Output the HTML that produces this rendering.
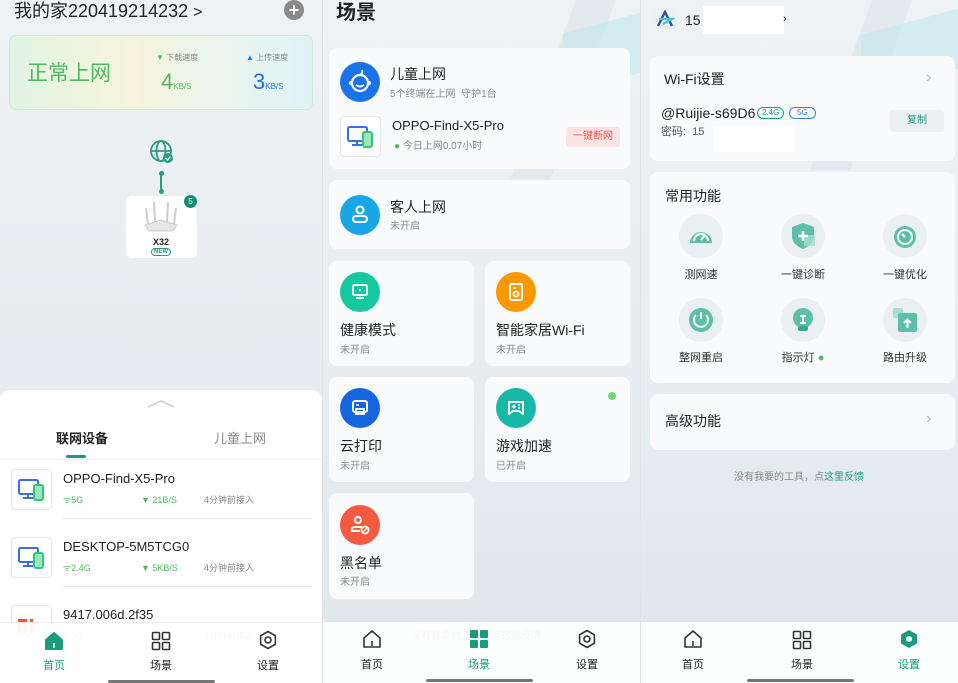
<!DOCTYPE html>
<html><head><meta charset="utf-8"><style>
*{margin:0;padding:0;box-sizing:border-box}
body{width:958px;height:683px;overflow:hidden;font-family:"Liberation Sans","Noto Sans CJK SC",sans-serif;color:#222;background:#fff;position:relative}
.p{position:absolute;top:0;height:683px;overflow:hidden;background:linear-gradient(180deg,#eef2f5 0%,#e6ecef 60%,#dfe7eb 100%)}
.a{position:absolute;white-space:nowrap}
.c{position:absolute;background:#f8fafb;border-radius:8px}
.t{line-height:1}
.nav{position:absolute;left:0;right:0;top:622px;height:61px;background:rgba(255,255,255,.93)}
.nl{position:absolute;top:34px;font-size:11px;transform:translateX(-50%);color:#222}
.ind{position:absolute;top:57px;height:3px;width:107px;background:#777;border-radius:2px}
.g{color:#8a8a8a}
.circ{position:absolute;width:40px;height:40px;border-radius:50%}
.fi{position:absolute;width:44px;height:44px;border-radius:50%;background:#eaf0f1}
.fl{position:absolute;font-size:11px;color:#333;transform:translateX(-50%)}
</style></head><body>

<!-- Panel 1 -->
<div class="p" style="left:0;width:322px">
 <div class="a t" style="left:14px;top:2px;font-size:18px">我的家220419214232 <span style="font-size:16px">&gt;</span></div>
 <div class="a" style="left:284px;top:0;width:20px;height:20px;border-radius:50%;background:#8a8a8a;color:#fff;font-size:18px;line-height:20px;text-align:center;font-weight:bold">+</div>
 <div class="a" style="left:9px;top:35px;width:304px;height:75px;border-radius:7px;border:1px solid #d4e8d8;background:linear-gradient(90deg,#e2f4e4 0%,#f6f4dc 40%,#eaf5ee 70%,#dff3f6 100%)"></div>
 <div class="a t" style="left:27px;top:63px;font-size:21px;color:#4dbb5c">正常上网</div>
 <div class="a t" style="left:156px;top:54px;font-size:8px;color:#888"><span style="color:#4dbb5c">▼</span> 下载速度</div>
 <div class="a t" style="left:161px;top:71px;font-size:22px;color:#4dbb5c">4<span style="font-size:8px">KB/S</span></div>
 <div class="a t" style="left:246px;top:54px;font-size:8px;color:#888"><span style="color:#1e6ff0">▲</span> 上传速度</div>
 <div class="a t" style="left:253px;top:71px;font-size:22px;color:#1e6ff0">3<span style="font-size:8px">KB/S</span></div>
 <svg class="a" style="left:149px;top:139px" width="26" height="26" viewBox="0 0 26 26"><g fill="none" stroke="#2a9d80" stroke-width="1.8"><circle cx="12" cy="12" r="10"/><ellipse cx="12" cy="12" rx="4.5" ry="10"/><line x1="2" y1="12" x2="22" y2="12"/></g><circle cx="19" cy="19" r="5" fill="#2a9d80"/><path d="M16.5 19l2 2 3-3.5" stroke="#fff" stroke-width="1.3" fill="none"/></svg>
 <div class="a" style="left:160px;top:173px;width:1.5px;height:19px;background:#2a9d80"></div>
 <div class="a" style="left:158.5px;top:171px;width:5px;height:5px;border-radius:50%;background:#2a9d80"></div>
 <div class="a" style="left:158.5px;top:189px;width:5px;height:5px;border-radius:50%;background:#2a9d80"></div>
 <div class="a" style="left:126px;top:196px;width:71px;height:62px;background:#fff;border-radius:6px"></div>
 <svg class="a" style="left:140px;top:200px" width="42" height="35"><g stroke="#ccc" stroke-width="2"><line x1="6" y1="8" x2="8" y2="24"/><line x1="14" y1="2" x2="15" y2="22"/><line x1="28" y1="2" x2="27" y2="22"/><line x1="36" y1="8" x2="34" y2="24"/></g><path d="M5 25 L21 20 L37 25 L33 31 L9 31Z" fill="#e6e6e6" stroke="#ccc"/></svg>
 <div class="a t" style="left:153px;top:238px;font-size:9px;font-weight:bold">X32</div>
 <div class="a t" style="left:151px;top:248px;font-size:6px;color:#2a9d80;border:1px solid #2a9d80;border-radius:5px;padding:0 2px;font-weight:bold">NEW</div>
 <div class="a" style="left:184px;top:195px;width:13px;height:13px;border-radius:50%;background:#148f74;color:#fff;font-size:8px;line-height:13px;text-align:center">5</div>

 <div class="a" style="left:0;top:390px;width:322px;height:293px;background:#fff;border-radius:10px 10px 0 0"></div>
 <svg class="a" style="left:147px;top:399px" width="28" height="10"><path d="M1 8 L14 2 L27 8" stroke="#ccc" stroke-width="1.5" fill="none"/></svg>
 <div class="a t" style="left:56px;top:432px;font-size:13px;font-weight:bold">联网设备</div>
 <div class="a t" style="left:214px;top:432px;font-size:13px;color:#888">儿童上网</div>
 <div class="a" style="left:66px;top:455px;width:20px;height:3px;border-radius:2px;background:#1a9c7c"></div>
 <div class="a" style="left:0;top:459px;width:322px;height:1px;background:#eee"></div>

 <div class="a" style="left:11px;top:469px;width:41px;height:41px;border:1px solid #e6e6e6;border-radius:4px;background:#fff"></div>
 <svg class="a" style="left:17px;top:477px" width="30" height="26"><rect x="2" y="3" width="19" height="14" rx="1.5" fill="none" stroke="#3a6de8" stroke-width="2"/><line x1="11" y1="17" x2="11" y2="21" stroke="#3a6de8" stroke-width="2"/><line x1="6" y1="21" x2="16" y2="21" stroke="#3a6de8" stroke-width="2"/><rect x="17" y="8" width="9" height="15" rx="2" fill="#9be9b8" stroke="#2ec77a" stroke-width="2"/></svg>
 <div class="a t" style="left:63px;top:472px;font-size:13px">OPPO-Find-X5-Pro</div>
 <div class="a t" style="left:63px;top:496px;font-size:9px;color:#4dbb5c">ᯤ5G</div>
 <div class="a t" style="left:141px;top:496px;font-size:9px;color:#4dbb5c">▼ 21B/S</div>
 <div class="a t" style="left:204px;top:496px;font-size:9px;color:#888">4分钟前接入</div>
 <div class="a" style="left:63px;top:518px;width:249px;height:1px;background:#e6e6e6"></div>

 <div class="a" style="left:11px;top:537px;width:41px;height:41px;border:1px solid #e6e6e6;border-radius:4px;background:#fff"></div>
 <svg class="a" style="left:17px;top:545px" width="30" height="26"><rect x="2" y="3" width="19" height="14" rx="1.5" fill="none" stroke="#3a6de8" stroke-width="2"/><line x1="11" y1="17" x2="11" y2="21" stroke="#3a6de8" stroke-width="2"/><line x1="6" y1="21" x2="16" y2="21" stroke="#3a6de8" stroke-width="2"/><rect x="17" y="8" width="9" height="15" rx="2" fill="#9be9b8" stroke="#2ec77a" stroke-width="2"/></svg>
 <div class="a t" style="left:63px;top:540px;font-size:13px">DESKTOP-5M5TCG0</div>
 <div class="a t" style="left:63px;top:564px;font-size:9px;color:#4dbb5c">ᯤ2.4G</div>
 <div class="a t" style="left:141px;top:564px;font-size:9px;color:#4dbb5c">▼ 5KB/S</div>
 <div class="a t" style="left:204px;top:564px;font-size:9px;color:#888">4分钟前接入</div>
 <div class="a" style="left:63px;top:586px;width:249px;height:1px;background:#e6e6e6"></div>

 <div class="a" style="left:11px;top:605px;width:41px;height:41px;border:1px solid #e6e6e6;border-radius:4px;background:#fff"></div>
 <div class="a" style="left:18px;top:619px;width:8px;height:14px;border:3px solid #f05a22;border-bottom:none;border-right:none"></div>
 <div class="a" style="left:24px;top:619px;width:3px;height:14px;background:#f05a22"></div>
 <div class="a" style="left:30px;top:619px;width:3px;height:14px;background:#f05a22"></div>
 <div class="a t" style="left:63px;top:608px;font-size:13px">9417.006d.2f35</div>
 <div class="a t" style="left:63px;top:632px;font-size:9px;color:#4dbb5c">ᯤ5G</div>
 <div class="a t" style="left:141px;top:632px;font-size:9px;color:#4dbb5c">▼ 0B/S</div>
 <div class="a t" style="left:204px;top:632px;font-size:9px;color:#888">3分钟前接入</div>

 <div class="nav" style="border-top:1px solid #eee">
  <svg class="a" style="left:44px;top:8px" width="20" height="20"><path d="M2 9 L10 2 L18 9 V18 H2Z" fill="#1a9c7c" stroke="#1a9c7c" stroke-linejoin="round" stroke-width="2"/><line x1="10" y1="12" x2="10" y2="17" stroke="#fff" stroke-width="1.5"/></svg>
  <div class="nl" style="left:54px;color:#1a9c7c">首页</div>
  <svg class="a" style="left:151px;top:8px" width="20" height="20"><g fill="none" stroke="#333" stroke-width="1.6"><rect x="1.5" y="1.5" width="7" height="7" rx="1"/><rect x="11.5" y="1.5" width="7" height="7" rx="1"/><rect x="1.5" y="11.5" width="7" height="7" rx="1"/><rect x="11.5" y="11.5" width="7" height="7" rx="1"/></g></svg>
  <div class="nl" style="left:161px">场景</div>
  <svg class="a" style="left:258px;top:7px" width="20" height="21" viewBox="0 0 20 21"><path d="M10 1.5 L17.4 5.8 V14.2 L10 18.5 L2.6 14.2 V5.8Z" fill="none" stroke="#333" stroke-width="1.6" stroke-linejoin="round"/><circle cx="10" cy="10" r="3" fill="none" stroke="#333" stroke-width="1.6"/></svg>
  <div class="nl" style="left:268px">设置</div>
  <div class="ind" style="left:108px"></div>
 </div>
</div>

<!-- Panel 2 -->
<div class="p" style="left:322px;width:318px;border-left:1px solid #e0e4e6">
 <div class="a" style="left:220px;top:0;width:40px;height:180px;background:rgba(220,226,230,.6);transform:skewX(-20deg)"></div>
 <div class="a" style="left:240px;top:20px;width:100px;height:60px;background:rgba(190,232,238,.55);transform:skewY(-15deg)"></div>
 <div class="a t" style="left:13px;top:3px;font-size:20px;font-weight:bold">场景</div>
 <div class="c" style="left:6px;top:48px;width:301px;height:121px"></div>
 <div class="circ" style="left:17px;top:62px;background:#1a73e8"></div>
 <svg class="a" style="left:23px;top:68px" width="28" height="28"><circle cx="14" cy="15" r="8" fill="none" stroke="#fff" stroke-width="2.2"/><path d="M14 7 q3-2 2-5" stroke="#fff" stroke-width="2" fill="none"/><path d="M10 17 q4 3 8 0" stroke="#fff" stroke-width="2" fill="none"/><circle cx="5" cy="15" r="2" fill="#fff"/><circle cx="23" cy="15" r="2" fill="#fff"/></svg>
 <div class="a t" style="left:67px;top:67px;font-size:14px">儿童上网</div>
 <div class="a t g" style="left:67px;top:90px;font-size:10px">5个终端在上网&nbsp; 守护1台</div>
 <div class="a" style="left:17px;top:116px;width:41px;height:41px;border:1px solid #e6e6e6;border-radius:4px;background:#fff"></div>
 <svg class="a" style="left:23px;top:124px" width="30" height="26"><rect x="2" y="3" width="19" height="14" rx="1.5" fill="none" stroke="#3a6de8" stroke-width="2"/><line x1="11" y1="17" x2="11" y2="21" stroke="#3a6de8" stroke-width="2"/><line x1="6" y1="21" x2="16" y2="21" stroke="#3a6de8" stroke-width="2"/><rect x="17" y="8" width="9" height="15" rx="2" fill="#9be9b8" stroke="#2ec77a" stroke-width="2"/></svg>
 <div class="a t" style="left:69px;top:119px;font-size:13px">OPPO-Find-X5-Pro</div>
 <div class="a t g" style="left:71px;top:142px;font-size:10px"><span style="color:#4dbb5c">●</span> 今日上网0.07小时</div>
 <div class="a" style="left:243px;top:127px;width:54px;height:20px;border-radius:3px;background:#fbe4e4;color:#e05555;font-size:10px;line-height:20px;text-align:center">一键断网</div>

 <div class="c" style="left:6px;top:180px;width:301px;height:69px"></div>
 <div class="circ" style="left:17px;top:195px;background:#1aa7e8"></div>
 <svg class="a" style="left:27px;top:204px" width="20" height="20"><circle cx="10" cy="6" r="3.5" fill="none" stroke="#fff" stroke-width="2"/><rect x="3" y="12" width="14" height="6" rx="3" fill="none" stroke="#fff" stroke-width="2"/></svg>
 <div class="a t" style="left:67px;top:200px;font-size:14px">客人上网</div>
 <div class="a t g" style="left:67px;top:222px;font-size:10px">未开启</div>

 <div class="c" style="left:6px;top:261px;width:145px;height:105px"></div>
 <div class="circ" style="left:17px;top:272px;background:#14c9a0"></div>
 <svg class="a" style="left:27px;top:282px" width="20" height="20"><rect x="3" y="3" width="14" height="10" rx="1.5" fill="none" stroke="#fff" stroke-width="2"/><line x1="6" y1="16" x2="14" y2="16" stroke="#fff" stroke-width="2"/><circle cx="10" cy="8" r="1" fill="#fff"/></svg>
 <div class="a t" style="left:17px;top:323px;font-size:14px">健康模式</div>
 <div class="a t g" style="left:17px;top:346px;font-size:10px">未开启</div>

 <div class="c" style="left:162px;top:261px;width:145px;height:105px"></div>
 <div class="circ" style="left:173px;top:272px;background:#ff9800"></div>
 <svg class="a" style="left:183px;top:282px" width="20" height="20"><rect x="4" y="2" width="12" height="16" rx="1.5" fill="none" stroke="#fff" stroke-width="2"/><circle cx="10" cy="12" r="2.5" fill="none" stroke="#fff" stroke-width="1.8"/><line x1="7" y1="6" x2="10" y2="6" stroke="#fff" stroke-width="1.5"/></svg>
 <div class="a t" style="left:173px;top:323px;font-size:14px">智能家居Wi-Fi</div>
 <div class="a t g" style="left:173px;top:346px;font-size:10px">未开启</div>

 <div class="c" style="left:6px;top:377px;width:145px;height:105px"></div>
 <div class="circ" style="left:17px;top:388px;background:#1565e0"></div>
 <svg class="a" style="left:27px;top:398px" width="20" height="20"><rect x="3" y="3" width="14" height="11" rx="2" fill="none" stroke="#fff" stroke-width="2"/><rect x="6" y="11" width="8" height="5" fill="none" stroke="#fff" stroke-width="1.8"/><line x1="6" y1="7" x2="9" y2="7" stroke="#fff" stroke-width="1.5"/></svg>
 <div class="a t" style="left:17px;top:439px;font-size:14px">云打印</div>
 <div class="a t g" style="left:17px;top:462px;font-size:10px">未开启</div>

 <div class="c" style="left:162px;top:377px;width:145px;height:105px"></div>
 <div class="circ" style="left:173px;top:388px;background:#17b8a8"></div>
 <svg class="a" style="left:183px;top:398px" width="20" height="20"><path d="M3 4 H17 V16 L13 13 H7 L3 16Z" fill="none" stroke="#fff" stroke-width="2" stroke-linejoin="round"/><path d="M6 8.5h4M8 6.5v4" stroke="#fff" stroke-width="1.5"/><circle cx="13" cy="7" r="1" fill="#fff"/><circle cx="13" cy="10" r="1" fill="#fff"/></svg>
 <div class="a t" style="left:173px;top:439px;font-size:14px">游戏加速</div>
 <div class="a t g" style="left:173px;top:462px;font-size:10px">已开启</div>
 <div class="a" style="left:285px;top:392px;width:8px;height:8px;border-radius:50%;background:#6ed87a"></div>

 <div class="c" style="left:6px;top:493px;width:145px;height:106px"></div>
 <div class="circ" style="left:17px;top:505px;background:#f35a3f"></div>
 <svg class="a" style="left:27px;top:515px" width="22" height="22"><circle cx="8" cy="5" r="3" fill="none" stroke="#fff" stroke-width="2"/><path d="M12 12 H5 q-3 0-3 3 v1 h8" fill="none" stroke="#fff" stroke-width="2"/><circle cx="15" cy="15" r="3.5" fill="none" stroke="#fff" stroke-width="1.8"/><line x1="13" y1="17" x2="17" y2="13" stroke="#fff" stroke-width="1.5"/></svg>
 <div class="a t" style="left:17px;top:556px;font-size:14px">黑名单</div>
 <div class="a t g" style="left:17px;top:578px;font-size:10px">未开启</div>
 <div class="a t" style="left:88px;top:632px;font-size:10px;color:#888">没有我要的工具，点<span style="color:#1a9c7c">这里反馈</span></div>

 <div class="nav">
  <svg class="a" style="left:39px;top:7px" width="20" height="20"><path d="M2 9 L10 2 L18 9 V18 H2Z" fill="none" stroke="#333" stroke-linejoin="round" stroke-width="1.6"/><line x1="10" y1="12" x2="10" y2="17" stroke="#333" stroke-width="1.6"/></svg>
  <div class="nl" style="left:49px">首页</div>
  <svg class="a" style="left:146px;top:7px" width="20" height="20"><g fill="#1a9c7c"><rect x="1" y="1" width="8" height="8" rx="1"/><rect x="11" y="1" width="8" height="8" rx="1"/><rect x="1" y="11" width="8" height="8" rx="1"/><rect x="11" y="11" width="8" height="8" rx="1"/></g></svg>
  <div class="nl" style="left:156px;color:#1a9c7c">场景</div>
  <svg class="a" style="left:254px;top:7px" width="20" height="21" viewBox="0 0 20 21"><path d="M10 1.5 L17.4 5.8 V14.2 L10 18.5 L2.6 14.2 V5.8Z" fill="none" stroke="#333" stroke-width="1.6" stroke-linejoin="round"/><circle cx="10" cy="10" r="3" fill="none" stroke="#333" stroke-width="1.6"/></svg>
  <div class="nl" style="left:264px">设置</div>
  <div class="ind" style="left:103px"></div>
 </div>
</div>

<!-- Panel 3 -->
<div class="p" style="left:640px;width:318px;border-left:1px solid #e0e4e6">
 <div class="a" style="left:200px;top:0;width:40px;height:170px;background:rgba(220,226,230,.6);transform:skewX(-20deg)"></div>
 <div class="a" style="left:220px;top:20px;width:110px;height:60px;background:rgba(190,232,238,.55);transform:skewY(-15deg)"></div>
 <div class="a" style="left:10px;top:6px;width:26px;height:26px;border-radius:50%;background:#eef1f4"></div>
 <svg class="a" style="left:14px;top:10px" width="20" height="18"><path d="M3 16 L10 2 L17 16" fill="none" stroke="#3a4a9a" stroke-width="2.4"/><path d="M4 9 H17 L8 14" fill="none" stroke="#3bc6d8" stroke-width="2.2"/></svg>
 <div class="a t" style="left:44px;top:13px;font-size:14px">15</div>
 <div class="a" style="left:62px;top:6px;width:81px;height:28px;background:#fff"></div>
 <div class="a t" style="left:142px;top:14px;font-size:11px">›</div>

 <div class="c" style="left:9px;top:56px;width:305px;height:105px"></div>
 <div class="a t" style="left:23px;top:72px;font-size:14px">Wi-Fi设置</div>
 <div class="a t" style="left:285px;top:70px;font-size:16px;color:#bbb">›</div>
 <div class="a t" style="left:20px;top:106px;font-size:14px">@Ruijie-s69D6</div>
 <div class="a t" style="left:116px;top:107px;font-size:8px;color:#1a9c7c;border:1px solid #1a9c7c;border-radius:6px;padding:1px 4px">2.4G</div>
 <div class="a t" style="left:148px;top:107px;font-size:8px;color:#3a7de8;border:1px solid #3a7de8;border-radius:6px;padding:1px 7px">5G</div>
 <div class="a t" style="left:20px;top:127px;font-size:11px;color:#555">密码:&nbsp; 15</div>
 <div class="a" style="left:72px;top:126px;width:81px;height:26px;background:#fff"></div>
 <div class="a" style="left:249px;top:110px;width:54px;height:22px;border-radius:3px;background:#eaf0f2;color:#1a9c7c;font-size:10px;line-height:22px;text-align:center">复制</div>

 <div class="c" style="left:9px;top:172px;width:305px;height:211px"></div>
 <div class="a t" style="left:24px;top:189px;font-size:14px">常用功能</div>
 <div class="fi" style="left:38px;top:214px"></div>
 <div class="fi" style="left:140px;top:214px"></div>
 <div class="fi" style="left:242px;top:214px"></div>
 <div class="fi" style="left:38px;top:298px"></div>
 <div class="fi" style="left:140px;top:298px"></div>
 <div class="fi" style="left:242px;top:298px"></div>
 <svg class="a" style="left:45px;top:221px" width="30" height="30"><path d="M4 22 A11 11 0 1 1 26 22 Z" fill="#5cc0a8"/><path d="M8 20 A7 7 0 1 1 22 20" fill="none" stroke="#fff" stroke-width="2"/><line x1="15" y1="19" x2="19" y2="14" stroke="#fff" stroke-width="2"/></svg>
 <svg class="a" style="left:147px;top:221px" width="30" height="30"><path d="M15 2 L26 6 V15 C26 22 20 26 15 28 C10 26 4 22 4 15 V6Z" fill="#5cc0a8"/><rect x="16" y="14" width="11" height="11" fill="#a8ddd0" opacity=".8"/><path d="M15 10v10M10 15h10" stroke="#fff" stroke-width="2.5"/></svg>
 <svg class="a" style="left:249px;top:221px" width="30" height="30"><circle cx="15" cy="16" r="11" fill="#5cc0a8"/><circle cx="15" cy="16" r="7" fill="none" stroke="#fff" stroke-width="2"/><line x1="15" y1="16" x2="12" y2="13" stroke="#fff" stroke-width="2"/></svg>
 <svg class="a" style="left:45px;top:305px" width="30" height="30"><circle cx="15" cy="15" r="12" fill="#5cc0a8"/><path d="M10 10 A7 7 0 1 0 20 10" fill="none" stroke="#fff" stroke-width="2"/><line x1="15" y1="7" x2="15" y2="14" stroke="#fff" stroke-width="2"/></svg>
 <svg class="a" style="left:147px;top:305px" width="30" height="30"><circle cx="15" cy="13" r="10" fill="#5cc0a8"/><rect x="10" y="21" width="10" height="5" rx="2" fill="#3aa88e"/><path d="M12 11h6M15 11v7M12 18h6" stroke="#fff" stroke-width="2"/></svg>
 <svg class="a" style="left:249px;top:305px" width="30" height="30"><rect x="3" y="3" width="10" height="10" rx="2" fill="#a8ddd0"/><rect x="8" y="8" width="19" height="19" rx="2" fill="#5cc0a8"/><path d="M17.5 23v-8M14 18l3.5-3.5 3.5 3.5" stroke="#fff" stroke-width="2" fill="none"/></svg>
 <div class="fl" style="left:60px;top:266px">测网速</div>
 <div class="fl" style="left:162px;top:266px">一键诊断</div>
 <div class="fl" style="left:264px;top:266px">一键优化</div>
 <div class="fl" style="left:60px;top:349px">整网重启</div>
 <div class="fl" style="left:162px;top:349px">指示灯 <span style="color:#4dbb5c">●</span></div>
 <div class="fl" style="left:264px;top:349px">路由升级</div>

 <div class="c" style="left:9px;top:394px;width:305px;height:56px"></div>
 <div class="a t" style="left:24px;top:414px;font-size:14px">高级功能</div>
 <div class="a t" style="left:285px;top:411px;font-size:16px;color:#bbb">›</div>
 <div class="a t" style="left:93px;top:473px;font-size:10px;color:#888">没有我要的工具，点<span style="color:#1a9c7c">这里反馈</span></div>

 <div class="nav">
  <svg class="a" style="left:42px;top:7px" width="20" height="20"><path d="M2 9 L10 2 L18 9 V18 H2Z" fill="none" stroke="#333" stroke-linejoin="round" stroke-width="1.6"/><line x1="10" y1="12" x2="10" y2="17" stroke="#333" stroke-width="1.6"/></svg>
  <div class="nl" style="left:52px">首页</div>
  <svg class="a" style="left:151px;top:8px" width="20" height="20"><g fill="none" stroke="#333" stroke-width="1.6"><rect x="1.5" y="1.5" width="7" height="7" rx="1"/><rect x="11.5" y="1.5" width="7" height="7" rx="1"/><rect x="1.5" y="11.5" width="7" height="7" rx="1"/><rect x="11.5" y="11.5" width="7" height="7" rx="1"/></g></svg>
  <div class="nl" style="left:161px">场景</div>
  <svg class="a" style="left:258px;top:7px" width="20" height="21" viewBox="0 0 20 21"><path d="M10 1 L18 5.5 V14.5 L10 19 L2 14.5 V5.5Z" fill="#1a9c7c"/><circle cx="10" cy="10" r="3" fill="#fff"/></svg>
  <div class="nl" style="left:268px;color:#1a9c7c">设置</div>
  <div class="ind" style="left:106px"></div>
 </div>
</div>
</body></html>
